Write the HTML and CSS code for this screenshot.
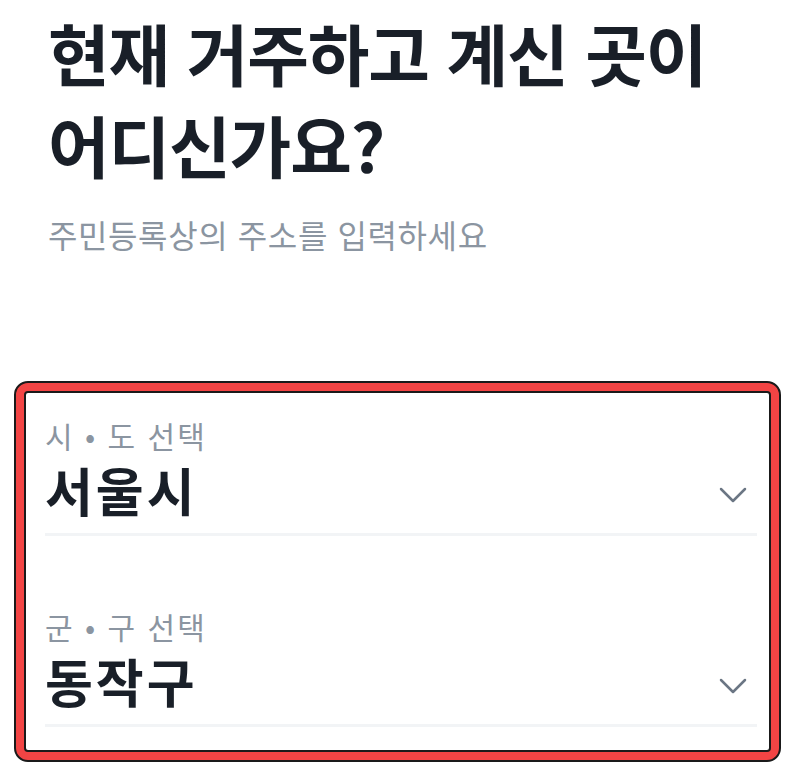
FILE: index.html
```html
<!DOCTYPE html>
<html lang="ko">
<head>
    <meta charset="UTF-8">
    <meta name="viewport" content="width=device-width, initial-scale=1.0">
    <title>주소 입력</title>
    <link rel="stylesheet" href="styles.css">
</head>
<body>

<div class="intro">
    <h1 class="title">현재 거주하고 계신 곳이<br>어디신가요?</h1>
    <p class="subtitle">주민등록상의 주소를 입력하세요</p>
</div>

<div class="highlight">
    <div class="form">
        <div class="field">
            <div class="label">시 • 도 선택</div>
            <div class="select">
                <span class="value">서울시</span>
                <svg class="chevron" width="28" height="16" viewBox="0 0 28 16">
                    <path d="M2 2 L14 14 L26 2" fill="none" stroke="#6b7684" stroke-width="2.5" stroke-linecap="round" stroke-linejoin="round"/>
                </svg>
            </div>
        </div>
        <div class="field">
            <div class="label">군 • 구 선택</div>
            <div class="select">
                <span class="value">동작구</span>
                <svg class="chevron" width="28" height="16" viewBox="0 0 28 16">
                    <path d="M2 2 L14 14 L26 2" fill="none" stroke="#6b7684" stroke-width="2.5" stroke-linecap="round" stroke-linejoin="round"/>
                </svg>
            </div>
        </div>
    </div>
</div>

</body>
</html>
```

FILE: styles.css
```css
body {
    margin: 0;
    background-color: #ffffff;
    font-family: "Noto Sans CJK KR", "Noto Sans", sans-serif;
    color: #191f28;
}
.intro {
    padding: 6px 48px 0 48px;
}
.title {
    margin: 0;
    font-size: 67px;
    line-height: 92px;
    font-weight: 700;
    letter-spacing: -1.1px;
}
.subtitle {
    margin: 24px 0 0 0;
    font-size: 32px;
    line-height: 40px;
    color: #8b95a1;
    letter-spacing: 0.6px;
}
.highlight {
    margin: 127px 19px 0 14px;
    background-color: #f24444;
    border: 2px solid #1a1a1a;
    border-radius: 14px;
    padding: 8px;
}
.form {
    background-color: #ffffff;
    border: 2px solid #1a1a1a;
    border-radius: 4px;
    padding: 25px 12px 23px 19px;
}
.field + .field {
    margin-top: 73px;
}
.label {
    font-size: 30px;
    line-height: 34px;
    color: #8b95a1;
    letter-spacing: 2px;
}
.select {
    display: flex;
    align-items: center;
    justify-content: space-between;
    padding: 8px 10px 13px 0;
    border-bottom: 3px solid #f2f4f6;
}
.value {
    font-size: 52px;
    line-height: 60px;
    font-weight: 700;
    letter-spacing: 3px;
}
.chevron {
    margin-top: 10px;
}
```
